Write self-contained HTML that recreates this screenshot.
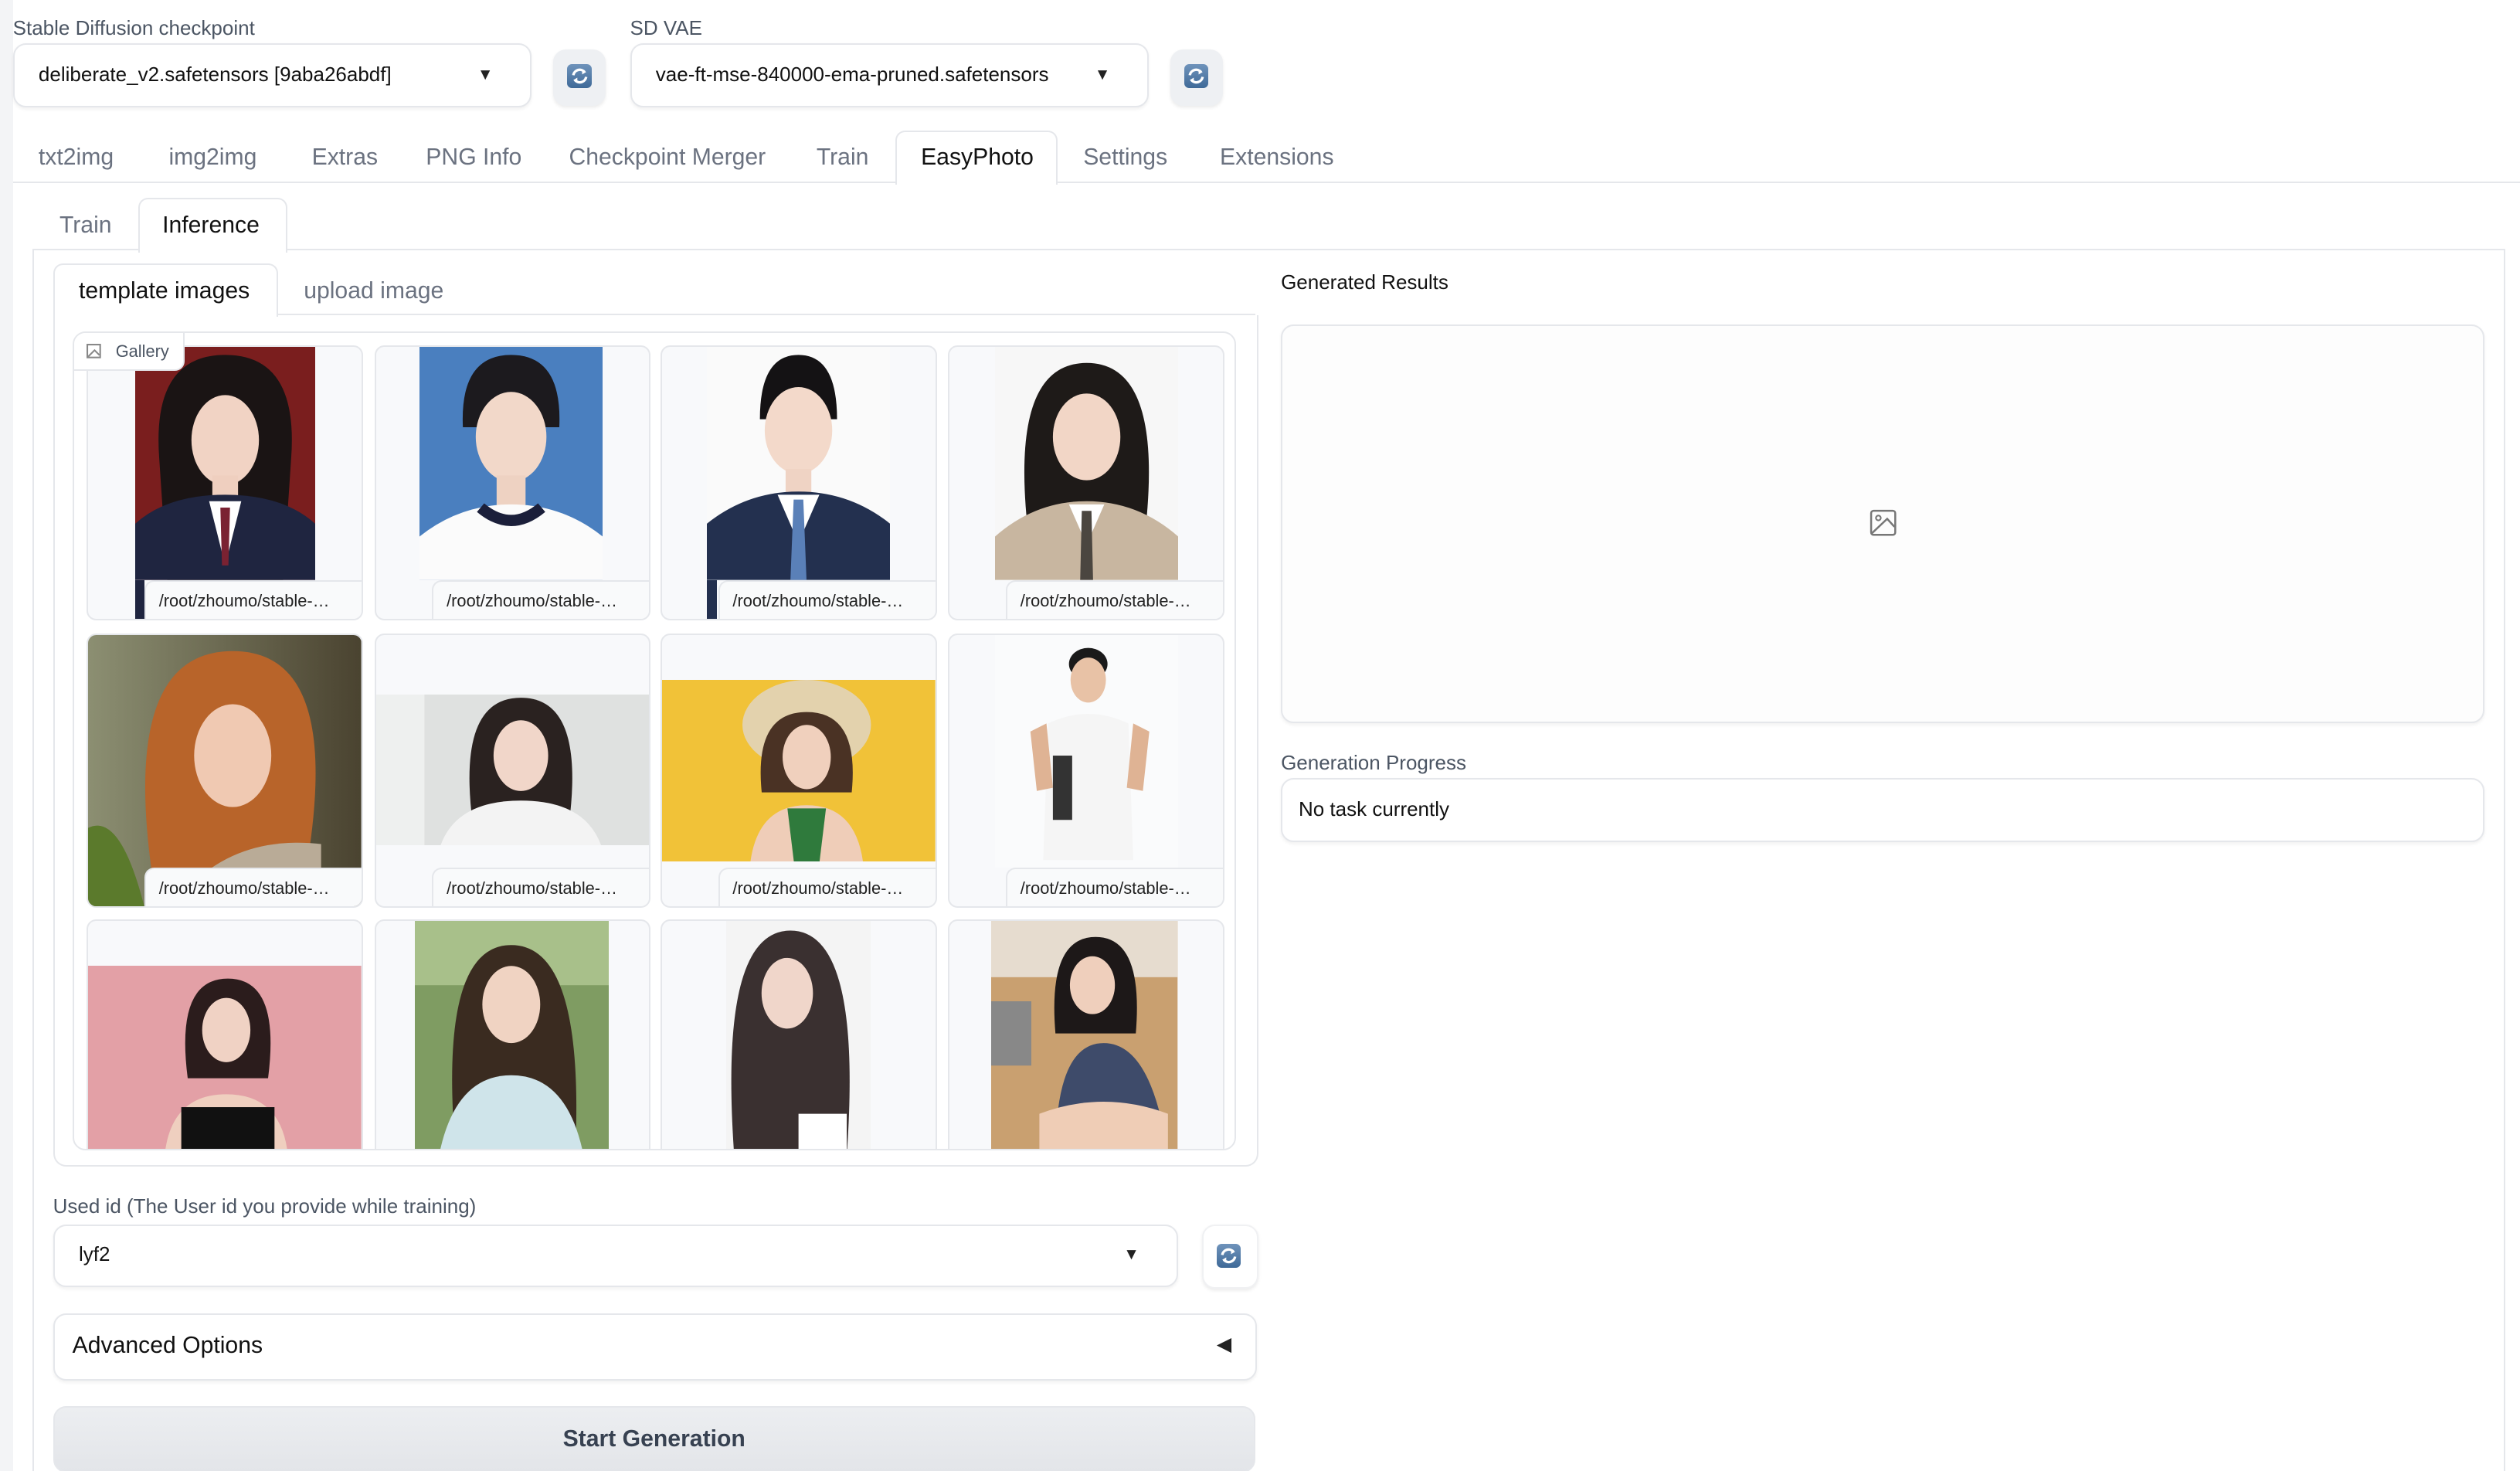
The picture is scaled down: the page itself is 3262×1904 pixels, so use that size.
<!DOCTYPE html>
<html><head><meta charset="utf-8"><style>
html,body{margin:0;padding:0;background:#fff;width:3262px;height:1904px;overflow:hidden}
#w{zoom:2.0804;position:relative;width:1568px;height:916px;font-family:"Liberation Sans",sans-serif;color:#1f2937;background:#fff}
.a{position:absolute}
.lbl{font-size:12.5px;color:#4b5563}
.box{position:absolute;background:#fff;border:1px solid #e5e7eb;border-radius:8px;box-shadow:0 1px 2px rgba(0,0,0,.06)}
.dd{font-size:12.5px;color:#111}
.arr{position:absolute;font-size:10px;color:#222}
.rb{position:absolute;background:#eef0f3;border-radius:8px;box-shadow:0 1px 2px rgba(0,0,0,.08)}
.ri{position:absolute;width:15px;height:15px;border-radius:3px;background:linear-gradient(#6f93bb,#3f6a98)}
.ri svg{position:absolute;left:2px;top:2px}
.tab{position:absolute;font-size:14.5px;color:#6b7280}
.act{position:absolute;background:#fff;border:1px solid #e5e7eb;border-bottom:none;border-radius:6px 6px 0 0}
.tile{position:absolute;width:170px;background:#f8f9fb;border:1px solid #e5e7eb;border-radius:6px;overflow:hidden}
.cap{position:absolute;right:0;bottom:0;width:135px;height:24px;background:#f9fafb;border-top-left-radius:6px;border-top:1px solid #e5e7eb;border-left:1px solid #e5e7eb;font-size:10.5px;color:#222;line-height:24px;padding-left:8px;box-sizing:border-box;white-space:nowrap}
</style></head><body><div id="w">
<div class="a" style="left:0;top:0;width:8px;height:916px;background:#f3f4f6"></div>

<div class="a lbl" style="left:8px;top:10px">Stable Diffusion checkpoint</div>
<div class="box" style="left:8px;top:27px;width:321px;height:38px"></div>
<div class="a dd" style="left:24px;top:39px">deliberate_v2.safetensors [9aba26abdf]</div>
<div class="arr" style="left:297px;top:41px">▼</div>
<div class="rb" style="left:344px;top:31px;width:33px;height:35px"><div class="ri" style="left:9px;top:9px"><svg width="11" height="11" viewBox="0 0 11 11"><path d="M1.5 5a4 4 0 0 1 7-2" fill="none" stroke="#fff" stroke-width="1.6"/><path d="M9.5 6a4 4 0 0 1-7 2" fill="none" stroke="#fff" stroke-width="1.6"/><path d="M7 1l2.5 2L7 4.5z M4 10L1.5 8 4 6.5z" fill="#fff"/></svg></div></div>

<div class="a lbl" style="left:392px;top:10px">SD VAE</div>
<div class="box" style="left:392px;top:27px;width:321px;height:38px"></div>
<div class="a dd" style="left:408px;top:39px">vae-ft-mse-840000-ema-pruned.safetensors</div>
<div class="arr" style="left:681px;top:41px">▼</div>
<div class="rb" style="left:728px;top:31px;width:33px;height:35px"><div class="ri" style="left:9px;top:9px"><svg width="11" height="11" viewBox="0 0 11 11"><path d="M1.5 5a4 4 0 0 1 7-2" fill="none" stroke="#fff" stroke-width="1.6"/><path d="M9.5 6a4 4 0 0 1-7 2" fill="none" stroke="#fff" stroke-width="1.6"/><path d="M7 1l2.5 2L7 4.5z M4 10L1.5 8 4 6.5z" fill="#fff"/></svg></div></div>

<div class="a" style="left:8px;top:113px;width:1560px;height:1px;background:#e5e7eb"></div>
<div class="act" style="left:557px;top:81px;width:99px;height:33px"></div>
<div class="tab" style="left:24px;top:90px">txt2img</div>
<div class="tab" style="left:105px;top:90px">img2img</div>
<div class="tab" style="left:194px;top:90px">Extras</div>
<div class="tab" style="left:265px;top:90px">PNG Info</div>
<div class="tab" style="left:354px;top:90px">Checkpoint Merger</div>
<div class="tab" style="left:508px;top:90px">Train</div>
<div class="tab" style="left:573px;top:90px;color:#111">EasyPhoto</div>
<div class="tab" style="left:674px;top:90px">Settings</div>
<div class="tab" style="left:759px;top:90px">Extensions</div>

<div class="a" style="left:20px;top:155px;width:1537px;height:770px;border:1px solid #e5e7eb;border-bottom:none"></div>
<div class="act" style="left:86px;top:123px;width:91px;height:33px"></div>
<div class="tab" style="left:37px;top:132px">Train</div>
<div class="tab" style="left:101px;top:132px;color:#111">Inference</div>

<div class="a" style="left:33px;top:196px;width:748px;height:529px;border:1px solid #e5e7eb;border-radius:0 0 8px 8px;border-top:none"></div>
<div class="a" style="left:33px;top:195px;width:748px;height:1px;background:#e5e7eb"></div>
<div class="act" style="left:33px;top:164px;width:138px;height:32px"></div>
<div class="tab" style="left:49px;top:173px;color:#111">template images</div>
<div class="tab" style="left:189px;top:173px">upload image</div>

<div class="box" style="left:45px;top:206px;width:722px;height:508px;box-shadow:none;overflow:hidden">
<!-- row1 -->
<div class="tile" style="left:8px;top:8px;height:169px"><svg class="a" style="left:29px;top:0" width="112" height="145" viewBox="0 0 112 145"><rect width="112" height="145" fill="#7a1e1e"/><path d="M15 70q-5-65 41-65t41 65l-5 75H20z" fill="#1a1414"/><ellipse cx="56" cy="58" rx="21" ry="28" fill="#f1d3c4"/><rect x="48" y="80" width="16" height="18" fill="#efcfbf"/><path d="M0 145V110q20-18 56-18t56 18v35z" fill="#1f2540"/><path d="M46 96l10 40 10-40z" fill="#fff"/><path d="M53 100h6l-1 36h-4z" fill="#7a2232"/></svg><div class="a" style="left:29px;top:145px;width:6px;height:24px;background:#1f2540"></div><div class="cap">/root/zhoumo/stable-…</div></div>
<div class="tile" style="left:187px;top:8px;height:169px"><svg class="a" style="left:27px;top:0" width="114" height="145" viewBox="0 0 114 145"><rect width="114" height="145" fill="#4a7fbf"/><path d="M27 50q-2-45 30-45t30 45z" fill="#1c1a1e"/><ellipse cx="57" cy="56" rx="22" ry="28" fill="#f2d8c9"/><rect x="48" y="80" width="18" height="20" fill="#eed2c2"/><path d="M0 145V118q25-20 57-20t57 20v27z" fill="#fbfbfb"/><path d="M38 100q19 16 38 0" fill="none" stroke="#1b1f3a" stroke-width="7"/></svg><div class="cap">/root/zhoumo/stable-…</div></div>
<div class="tile" style="left:365px;top:8px;height:169px"><svg class="a" style="left:28px;top:0" width="114" height="145" viewBox="0 0 114 145"><rect width="114" height="145" fill="#fafafa"/><path d="M33 45q0-40 24-40t24 40z" fill="#141214"/><ellipse cx="57" cy="52" rx="21" ry="27" fill="#f3d9ca"/><rect x="49" y="76" width="16" height="18" fill="#efd3c4"/><path d="M0 145V110q25-20 57-20t57 20v35z" fill="#23304f"/><path d="M44 92l13 30 13-30z" fill="#fff"/><path d="M54 95h6l2 50h-10z" fill="#5a80b8"/></svg><div class="a" style="left:28px;top:145px;width:6px;height:24px;background:#23304f"></div><div class="cap">/root/zhoumo/stable-…</div></div>
<div class="tile" style="left:544px;top:8px;height:169px"><svg class="a" style="left:28px;top:0" width="114" height="145" viewBox="0 0 114 145"><rect width="114" height="145" fill="#f7f7f7"/><path d="M20 110q-10-100 37-100t37 100z" fill="#1e1a18"/><ellipse cx="57" cy="56" rx="21" ry="27" fill="#f2d6c6"/><path d="M0 145V118q25-22 57-22t57 22v27z" fill="#c8b6a0"/><path d="M46 98l11 25 11-25z" fill="#fff"/><path d="M54 102h6l1 43h-8z" fill="#4b4640"/></svg><div class="cap">/root/zhoumo/stable-…</div></div>
<!-- row2 -->
<div class="tile" style="left:8px;top:187px;height:169px"><svg class="a" style="left:0;top:0" width="170" height="169" viewBox="0 0 170 169"><defs><linearGradient id="g1" x1="0" x2="1"><stop offset="0" stop-color="#8c8f72"/><stop offset="1" stop-color="#4a4330"/></linearGradient></defs><rect width="170" height="169" fill="url(#g1)"/><path d="M40 150q-20-140 50-140t45 140z" fill="#b8642a"/><ellipse cx="90" cy="75" rx="24" ry="32" fill="#f0c9b2"/><path d="M70 150q30-25 75-20v39H70z" fill="#b9ab97"/><path d="M0 169V120q20-10 35 49z" fill="#5b7a2c"/></svg><div class="cap">/root/zhoumo/stable-…</div></div>
<div class="tile" style="left:187px;top:187px;height:169px"><svg class="a" style="left:0;top:37px" width="170" height="94" viewBox="0 0 170 94"><rect width="170" height="94" fill="#dfe1e0"/><rect x="0" y="0" width="30" height="94" fill="#eef0ef"/><path d="M60 80q-10-78 30-78t30 78z" fill="#2a2220"/><ellipse cx="90" cy="38" rx="17" ry="22" fill="#f1d6c9"/><path d="M40 94q10-28 50-28t50 28z" fill="#f3f3f3"/></svg><div class="cap">/root/zhoumo/stable-…</div></div>
<div class="tile" style="left:365px;top:187px;height:169px"><svg class="a" style="left:0;top:28px" width="170" height="113" viewBox="0 0 170 113"><rect width="170" height="113" fill="#f1c238"/><ellipse cx="90" cy="28" rx="40" ry="28" fill="#e3d2ad"/><path d="M62 70q-5-50 28-50t28 50z" fill="#4a3224"/><ellipse cx="90" cy="48" rx="15" ry="20" fill="#f0d0bd"/><path d="M55 113q5-35 35-35t35 35z" fill="#efcdb8"/><path d="M78 80h24l-4 33H82z" fill="#2f7a3c"/></svg><div class="cap">/root/zhoumo/stable-…</div></div>
<div class="tile" style="left:544px;top:187px;height:169px"><svg class="a" style="left:28px;top:0" width="114" height="145" viewBox="0 0 114 145"><rect width="114" height="145" fill="#fafbfc"/><ellipse cx="58" cy="18" rx="12" ry="10" fill="#1a1a1a"/><ellipse cx="58" cy="28" rx="11" ry="14" fill="#e8c2a6"/><path d="M30 140l3-85q25-12 50 0l3 85z" fill="#f5f5f5"/><path d="M22 60l10-5 4 40-10 2zM86 55l10 5-4 37-10-2z" fill="#dfb394"/><rect x="36" y="75" width="12" height="40" fill="#333"/></svg><div class="cap">/root/zhoumo/stable-…</div></div>
<!-- row3 -->
<div class="tile" style="left:8px;top:365px;height:160px"><svg class="a" style="left:0;top:28px" width="170" height="115" viewBox="0 0 170 115"><rect width="170" height="115" fill="#e3a0a6"/><path d="M62 70q-8-62 25-62t25 62z" fill="#2b1c1c"/><ellipse cx="86" cy="40" rx="15" ry="20" fill="#f0d2c4"/><path d="M48 115q5-35 38-35t38 35z" fill="#efcfbf"/><rect x="58" y="88" width="58" height="27" fill="#111"/></svg></div>
<div class="tile" style="left:187px;top:365px;height:160px"><svg class="a" style="left:24px;top:0" width="121" height="146" viewBox="0 0 121 146"><rect width="121" height="146" fill="#7f9c62"/><rect x="0" y="0" width="121" height="40" fill="#a8c08a"/><path d="M25 140q-10-125 35-125t40 125z" fill="#3a2b20"/><ellipse cx="60" cy="52" rx="18" ry="24" fill="#f0d3c2"/><path d="M15 146q10-50 45-50t45 50z" fill="#cfe4ea"/></svg></div>
<div class="tile" style="left:365px;top:365px;height:160px"><svg class="a" style="left:40px;top:0" width="90" height="146" viewBox="0 0 90 146"><rect width="90" height="146" fill="#f4f4f4"/><path d="M5 146q-10-140 35-140t35 140z" fill="#3a3030"/><ellipse cx="38" cy="45" rx="16" ry="22" fill="#f0d6ca"/><rect x="45" y="120" width="30" height="26" fill="#fff"/></svg></div>
<div class="tile" style="left:544px;top:365px;height:160px"><svg class="a" style="left:26px;top:0" width="116" height="146" viewBox="0 0 116 146"><rect width="116" height="146" fill="#c9a070"/><rect x="0" y="0" width="116" height="35" fill="#e6dccf"/><rect x="0" y="50" width="25" height="40" fill="#888"/><path d="M40 70q-5-60 25-60t25 60z" fill="#1d1818"/><ellipse cx="63" cy="40" rx="14" ry="18" fill="#efcfbc"/><path d="M40 146q0-70 30-70t40 70z" fill="#3e4b6a"/><path d="M30 120q40-15 80 0v26H30z" fill="#efcdb6"/></svg></div>
<div class="a" style="left:0;top:0;width:68px;height:23px;background:#fff;border-right:1px solid #e5e7eb;border-bottom:1px solid #e5e7eb;border-radius:0 0 6px 0;font-size:10.5px;color:#4b5563;line-height:23px"><svg class="a" style="left:8px;top:7px" width="9" height="9" viewBox="0 0 9 9"><rect x=".5" y=".5" width="8" height="8" fill="none" stroke="#888"/><path d="M1 8l4-4 3 3" fill="none" stroke="#888"/></svg><span style="position:absolute;left:26px">Gallery</span></div>
</div>

<div class="a lbl" style="left:33px;top:743px">Used id (The User id you provide while training)</div>
<div class="box" style="left:33px;top:762px;width:698px;height:37px"></div>
<div class="a dd" style="left:49px;top:773px">lyf2</div>
<div class="arr" style="left:699px;top:775px">▼</div>
<div class="rb" style="left:748px;top:762px;width:33px;height:38px;background:#fff;border:1px solid #f0f1f3"><div class="ri" style="left:8px;top:11px"><svg width="11" height="11" viewBox="0 0 11 11"><path d="M1.5 5a4 4 0 0 1 7-2" fill="none" stroke="#fff" stroke-width="1.6"/><path d="M9.5 6a4 4 0 0 1-7 2" fill="none" stroke="#fff" stroke-width="1.6"/><path d="M7 1l2.5 2L7 4.5z M4 10L1.5 8 4 6.5z" fill="#fff"/></svg></div></div>

<div class="box" style="left:33px;top:817px;width:747px;height:40px"></div>
<div class="a" style="left:45px;top:829px;font-size:14.5px;color:#111">Advanced Options</div>
<div class="a" style="left:757px;top:829px;font-size:12px;color:#222">◀</div>

<div class="a" style="left:33px;top:875px;width:748px;height:41px;border-radius:8px;background:linear-gradient(#eceef1,#e3e5e9);border:1px solid #e5e7eb;box-sizing:border-box;text-align:center;line-height:39px;font-size:14.5px;font-weight:bold;color:#374151">Start Generation</div>

<div class="a" style="left:797px;top:168px;font-size:12.5px;color:#111">Generated Results</div>
<div class="box" style="left:797px;top:202px;width:747px;height:246px;background:#fdfdfd"></div>
<svg class="a" style="left:1163px;top:317px" width="17" height="17" viewBox="0 0 17 17"><rect x="1" y="1" width="15" height="15" rx="1.5" fill="none" stroke="#777" stroke-width="1.2"/><circle cx="5.5" cy="5.5" r="1.5" fill="none" stroke="#777"/><path d="M1.5 15L11 6l4.5 5" fill="none" stroke="#777" stroke-width="1.2"/></svg>

<div class="a lbl" style="left:797px;top:467px">Generation Progress</div>
<div class="box" style="left:797px;top:484px;width:747px;height:38px"></div>
<div class="a" style="left:808px;top:496px;font-size:12.5px;color:#111">No task currently</div>
</div></body></html>
